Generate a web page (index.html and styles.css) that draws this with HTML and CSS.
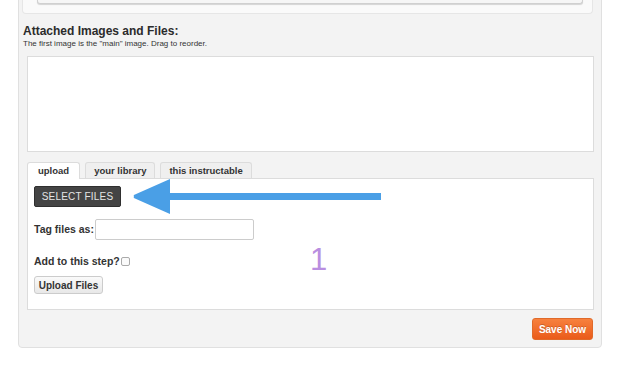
FILE: index.html
```html
<!DOCTYPE html>
<html lang="en">
  <head>
    <meta charset="UTF-8" />
    <title>Attached Images and Files</title>
    <link rel="stylesheet" href="styles.css">
  </head>
  <body>
    <div class="panel">
      <div class="prev-box">
        <div class="prev-inner"></div>
      </div>
      <h2 class="files-title">Attached Images and Files:</h2>
      <p class="files-note">The first image is the "main" image. Drag to reorder.</p>
      <div class="dropzone"></div>

      <ul class="tabs">
        <li class="tab active">upload</li>
        <li class="tab">your library</li>
        <li class="tab">this instructable</li>
      </ul>
      <div class="tab-body">
        <div class="select-row">
          <button class="select-btn">SELECT FILES</button>
          <svg class="arrow" width="250" height="36" viewBox="0 0 250 36">
            <path d="M1,17.5 Q0,16.5 2,15.6 L37,0 L37,14 L248,14 L248,21 L37,21 L37,35 L2,19.4 Q0,18.5 1,17.5 Z" fill="#4a9fe6" />
          </svg>
        </div>
        <div class="form-row tag-row">
          <label for="tags">Tag files as:</label><input type="text" id="tags" class="tag-input" />
        </div>
        <div class="form-row step-row">
          <label for="addstep">Add to this step?</label><input type="checkbox" id="addstep" class="step-check" />
          <span class="step-num">1</span>
        </div>
        <button class="upload-btn">Upload Files</button>
      </div>
      <div class="panel-footer">
        <button class="save-btn">Save Now</button>
      </div>
    </div>
  </body>
</html>
```

FILE: styles.css
```css
* {
  margin: 0;
  padding: 0;
  box-sizing: border-box;
}
body {
  font-family: "Liberation Sans", Arial, sans-serif;
  background: #fff;
  color: #333;
}
.panel {
  margin: -20px 0 0 18px;
  width: 584px;
  background: #f3f3f3;
  border: 1px solid #e0e0e0;
  border-radius: 4px;
  padding: 0 7px 7px 8px;
}
.prev-box {
  margin: 0 1px 0 -5px;
  height: 33px;
  background: #fafafa;
  border: 1px solid #e6e6e6;
  border-top: none;
  border-radius: 0 0 4px 4px;
  padding: 0 9px 0 14px;
}
.prev-inner {
  height: 23px;
  background: #f6f6f6;
  border: 1px solid #d0d0d0;
  border-top: none;
  border-radius: 0 0 3px 3px;
  box-shadow: 0 1px 1px rgba(0, 0, 0, 0.15);
}
.files-title {
  font-size: 12px;
  font-weight: bold;
  color: #2b2b2b;
  margin: 10px 0 0 -4px;
  line-height: 14px;
}
.files-note {
  font-size: 8px;
  margin: 1px 0 0 -4px;
  line-height: 10px;
}
.dropzone {
  margin-top: 7px;
  height: 96px;
  background: #fff;
  border: 1px solid #dcdcdc;
}
.tabs {
  list-style: none;
  display: flex;
  gap: 5px;
  margin-top: 10px;
  height: 16px;
}
.tab {
  font-size: 9.5px;
  font-weight: bold;
  color: #333;
  background: #efefef;
  border: 1px solid #dcdcdc;
  border-bottom: none;
  border-radius: 3px 3px 0 0;
  padding: 2px 8px 0;
  line-height: 12px;
}
.tab.active {
  background: #fff;
  height: 17px;
  position: relative;
  z-index: 1;
  padding: 2px 10px 0;
}
.tab-body {
  background: #fff;
  border: 1px solid #dcdcdc;
  height: 132px;
  padding: 7px 6px;
}
.select-row {
  display: flex;
  align-items: center;
  height: 21px;
}
.select-btn {
  font-family: inherit;
  font-size: 10px;
  color: #e4e4e4;
  background: #444;
  border: 1px solid #2f2f2f;
  border-radius: 2px;
  width: 87px;
  height: 21px;
  letter-spacing: 0.2px;
  flex-shrink: 0;
}
.arrow {
  margin-left: 12px;
  display: block;
  flex-shrink: 0;
}
.form-row {
  display: flex;
  align-items: center;
  font-size: 10.5px;
  font-weight: bold;
}
.form-row label {
  line-height: 13px;
}
.tag-row {
  margin-top: 12px;
}
.tag-input {
  width: 159px;
  height: 21px;
  border: 1px solid #ccc;
  border-radius: 2px;
  margin-left: 1px;
}
.step-row {
  margin-top: 15px;
  position: relative;
}
.step-check {
  appearance: none;
  width: 9px;
  height: 9px;
  border: 1px solid #aaa;
  border-radius: 2px;
  margin-left: 1px;
  background: #fafafa;
}
.step-num {
  font-size: 31px;
  font-weight: normal;
  color: #b98ee0;
  position: absolute;
  left: 276px;
  top: -13px;
  line-height: normal;
}
.upload-btn {
  display: block;
  margin-top: 8px;
  font-family: inherit;
  font-size: 10px;
  font-weight: bold;
  color: #333;
  background: linear-gradient(#fafafa, #e8e8e8);
  border: 1px solid #ccc;
  border-radius: 3px;
  width: 69px;
  height: 18px;
}
.panel-footer {
  display: flex;
  justify-content: flex-end;
  padding-top: 8px;
}
.save-btn {
  font-family: inherit;
  font-size: 10px;
  font-weight: bold;
  color: #fff;
  background: linear-gradient(#f7813e, #ea5b1a);
  border: 1px solid #e06a2a;
  border-radius: 3px;
  width: 61px;
  height: 22px;
  margin-right: 1px;
  text-shadow: 0 -1px 0 rgba(0, 0, 0, 0.2);
}
```
